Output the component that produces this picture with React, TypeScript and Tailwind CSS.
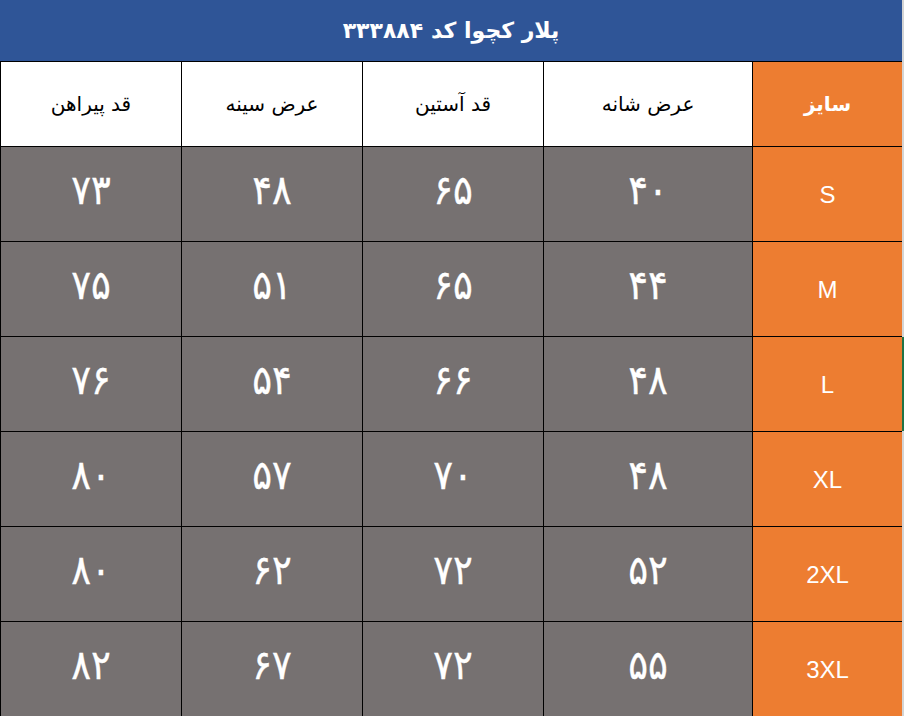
import React from "react";

const rows = [
  { size: "S", v: ["۷۳", "۴۸", "۶۵", "۴۰"] },
  { size: "M", v: ["۷۵", "۵۱", "۶۵", "۴۴"] },
  { size: "L", v: ["۷۶", "۵۴", "۶۶", "۴۸"] },
  { size: "XL", v: ["۸۰", "۵۷", "۷۰", "۴۸"] },
  { size: "2XL", v: ["۸۰", "۶۲", "۷۲", "۵۲"] },
  { size: "3XL", v: ["۸۲", "۶۷", "۷۲", "۵۵"] },
];

const heads = ["قد پیراهن", "عرض سینه", "قد آستین", "عرض شانه"];

export default function App() {
  return (
    <div className="w-[904px] h-[716px] flex bg-white">
      <div className="w-[902px] flex flex-col">
        <div className="h-[61px] bg-[#2f5597] flex items-center justify-center">
          <span
            dir="rtl"
            className="text-white font-bold text-[22px] font-['DejaVu_Sans',sans-serif]"
          >
            پلار کچوا کد ۳۳۳۸۸۴
          </span>
        </div>
        <div className="grid grid-cols-[180px_180px_180px_208px_149px] grid-rows-[84px_repeat(6,94px)] gap-px bg-black pl-px pt-px">
          {heads.map((h) => (
            <div key={h} className="bg-white flex items-center justify-center">
              <span dir="rtl" className="text-black text-[20px] font-['DejaVu_Sans',sans-serif]">
                {h}
              </span>
            </div>
          ))}
          <div className="bg-[#ed7d31] flex items-center justify-center">
            <span dir="rtl" className="text-white font-bold text-[20px] font-['DejaVu_Sans',sans-serif]">
              سایز
            </span>
          </div>
          {rows.map((r) => (
            <React.Fragment key={r.size}>
              {r.v.map((n, i) => (
                <div key={i} className="bg-[#767171] flex items-center justify-center pb-[8px]">
                  <span dir="rtl" className="text-white font-normal text-[41px] leading-none tracking-[4px] [-webkit-text-stroke:0.3px_white] font-['DejaVu_Sans_Condensed',sans-serif]">
                    {n}
                  </span>
                </div>
              ))}
              <div className="bg-[#ed7d31] flex items-center justify-center pt-[2px]">
                <span className="text-white text-[24px] font-['Liberation_Sans',sans-serif]">
                  {r.size}
                </span>
              </div>
            </React.Fragment>
          ))}
        </div>
      </div>
      <div className="w-[2px] flex flex-col">
        <div className="h-[337px] bg-[#d4d4d4]" />
        <div className="h-[94px] bg-[#217346]" />
        <div className="flex-1 bg-[#d4d4d4]" />
      </div>
    </div>
  );
}
